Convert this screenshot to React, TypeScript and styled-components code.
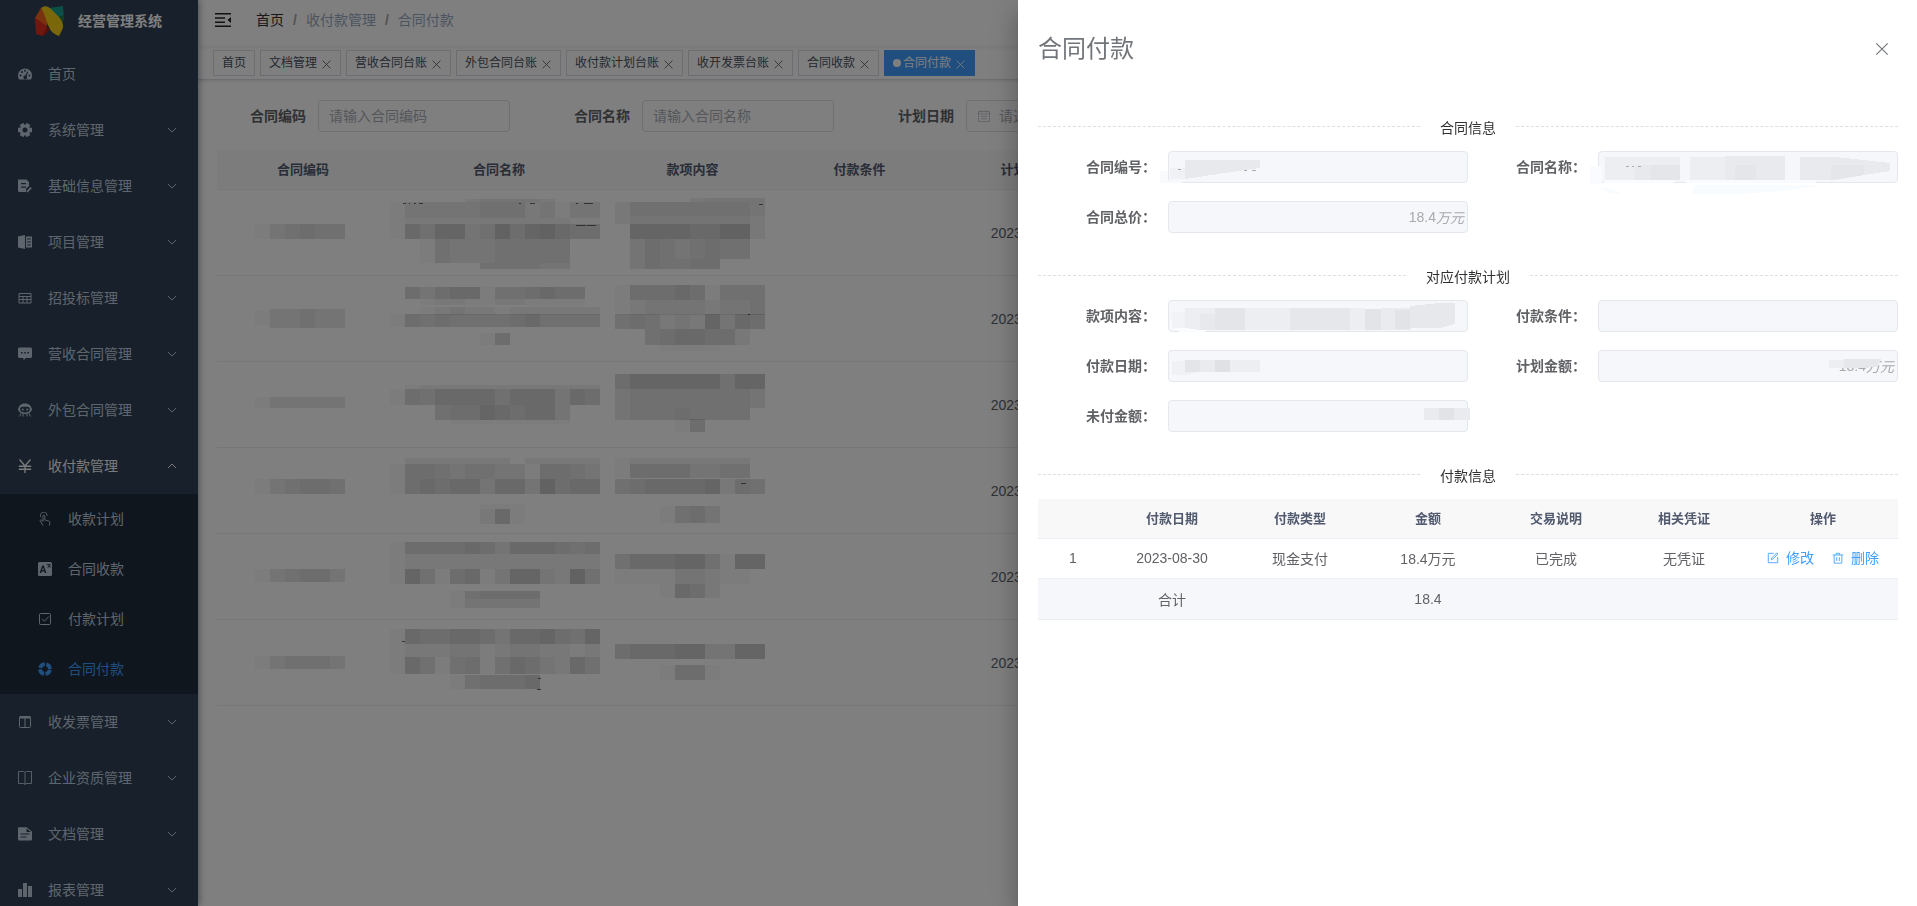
import React from 'react';
import styled, { createGlobalStyle, css } from 'styled-components';

const GlobalStyle = createGlobalStyle`
  *, *::before, *::after { box-sizing: border-box; }
  body {
    margin: 0;
    color: #606266;
    background: #fff;
    font-family: "Liberation Sans", "Noto Sans CJK SC", sans-serif;
    font-size: 14px;
    overflow: hidden;
  }
  button { font: inherit; color: inherit; background: none; border: 0; padding: 0; cursor: pointer; }
  a { color: inherit; text-decoration: none; }
  ul, ol { list-style: none; margin: 0; padding: 0; }
`;

/* ---------- icons ---------- */

type IconName =
  | 'dashboard' | 'gear' | 'edit' | 'build' | 'grid' | 'message' | 'people' | 'yen'
  | 'touch' | 'language' | 'checkbox' | 'ring' | 'columns' | 'book' | 'doc' | 'bars'
  | 'close' | 'calendar' | 'pen' | 'trash' | 'down' | 'up';

const line = { fill: 'none', stroke: 'currentColor', strokeWidth: 1 };
const thin = { fill: 'none', stroke: 'currentColor', strokeWidth: 0.9 };

const shapes: Record<IconName, React.ReactNode> = {
  dashboard: (
    <path
      fillRule="evenodd"
      d="M7 1.5a7 7 0 0 0-7 7c0 1.6.5 3 1.2 4.1h11.6A7.300 7.300 0 0 0 14 8.500a7 7 0 0 0-7-7zM2.600 7.600a1 1 0 1 1 0 2 1 1 0 0 1 0-2zM4 4a1 1 0 1 1 0 2 1 1 0 0 1 0-2zM7 2.700a1 1 0 1 1 0 2 1 1 0 0 1 0-2zM11.400 7.600a1 1 0 1 1 0 2 1 1 0 0 1 0-2zM9.300 4.500l.9.4-1.700 4.200a1.800 1.800 0 1 1-1.200-.5z"
    />
  ),
  gear: (
    <>
      <path fill="none" stroke="currentColor" strokeWidth="4.400" d="M0 7h14M3.500.94l7 12.120M10.500.94l-7 12.120" />
      <circle cx="7" cy="7" r="5.200" />
      <circle cx="7" cy="7" r="2.500" fill="#304156" />
    </>
  ),
  edit: (
    <>
      <path fillRule="evenodd" d="M0 .5h8.500L11 3v4L8 9.800V13H1.200A1.200 1.200 0 0 1 0 11.800zM3 4v1.200h5V4zm0 3.500v1.200h5V7.500z" />
      <path d="M12.600 8l1.200 1.200-4 4H8.500v-1.200z" />
    </>
  ),
  build: (
    <>
      <path d="M0 1.600L7 0v14l-7-1.600z" />
      <path fillRule="evenodd" d="M8 1.500h6v11H8zM9 3.500v1h3.800v-1zm0 3v1h3.800v-1zm0 3v1h3.800v-1z" />
    </>
  ),
  grid: <path {...line} d="M1 2.500h12v9.500H1zM1 5.500h12M1 8.500h12M5 5.500V12M9 5.500V12" />,
  message: (
    <path
      fillRule="evenodd"
      d="M1.500.5h11A1.500 1.500 0 0 1 14 2v7.500a1.500 1.500 0 0 1-1.500 1.500H7.800L5.500 13.500V11h-4A1.500 1.500 0 0 1 0 9.500V2A1.500 1.500 0 0 1 1.500.5zM3 5v1.600h1.600V5zm3.200 0v1.600h1.600V5zm3.200 0v1.600H11V5z"
    />
  ),
  people: (
    <>
      <path
        fillRule="evenodd"
        d="M7 .4c3.400 0 6 1.800 6.400 4.600.8.300.8 2.500-.2 3C12.300 10 10 11 7 11S1.700 10 .8 8C-.2 7.500-.2 5.300.6 5 1 2.200 3.600.4 7 .4zM3.600 4C1.800 4.300 1.700 8 3.400 8.800c2 1 5.200 1 7.200 0C12.300 8 12.200 4.300 10.400 4 8.500 3.700 5.500 3.700 3.600 4z"
      />
      <circle cx="4.800" cy="6.500" r="1" />
      <circle cx="9.200" cy="6.500" r="1" />
      <path {...line} d="M3 10.500L1.500 13.500M11 10.500l1.500 3M5 11v2.500M9 11v2.500" />
    </>
  ),
  yen: <path fill="none" stroke="currentColor" strokeWidth="1.400" d="M1.500.5L7 7l5.500-6.500M7 7v7M.8 7.300h12.400M.8 10.300h12.400" />,
  touch: (
    <path
      {...thin}
      d="M3 5.200A3.300 3.300 0 1 1 9 4M5 9.500V4.200c0-1.400 1.800-1.400 1.800 0V8l3.800 1c1.200.3 1.400 1 1.200 2l-.5 2.500M5 9.500L3.500 8c-.9-.7-1.800.2-1.200 1.200L5 13.500"
    />
  ),
  language: (
    <path
      fillRule="evenodd"
      d="M1.500 0h11A1.500 1.500 0 0 1 14 1.500v11a1.500 1.500 0 0 1-1.500 1.500h-11A1.500 1.500 0 0 1 0 12.500v-11A1.500 1.500 0 0 1 1.500 0zM4.300 3.500L1.600 11h1.500l.5-1.600h2.800L6.900 11h1.500L5.700 3.500zM5 5.200l1 3H4zM8.500 2.200v.8h2.200c-.1.900-.6 1.600-1.400 2.200l.5.600c.6-.4 1-.9 1.300-1.400.3.500.7 1 1.300 1.400l.4-.7c-.7-.5-1.100-1.200-1.200-2.100h1.200v-.8z"
    />
  ),
  checkbox: (
    <>
      <rect {...line} x="1.500" y="1.500" width="11" height="11" rx="1" />
      <path {...line} d="M4 6.800l2.400 2.400L10.800 4.500" />
    </>
  ),
  ring: (
    <circle cx="7" cy="7" r="4.900" fill="none" stroke="currentColor" strokeWidth="3.800" strokeDasharray="6.200 1.497" strokeDashoffset="-0.750" />
  ),
  columns: (
    <>
      <rect {...line} x="1.500" y="1.500" width="11" height="11" rx="1" />
      <path d="M1.500 1.500h11v2h-11z" />
      <path {...line} d="M7 2v10.500" />
    </>
  ),
  book: <path {...thin} d="M.5 .5h4.700C6.200.5 7 1 7 1.800c0-.8.8-1.300 1.800-1.300h4.700v12H8.800C7.800 12.500 7 12.800 7 13.500c0-.7-.8-1-1.800-1H.5zM7 1.800v11.500" />,
  doc: (
    <path
      fillRule="evenodd"
      d="M1.200.3H8.500L14 4.500v7.800a1.200 1.200 0 0 1-1.200 1.200H1.200A1.200 1.200 0 0 1 0 12.300V1.500A1.200 1.200 0 0 1 1.200.3zM8.500 1.500v3.500H13zM2.500 6.500v1h9v-1zm0 3v1h6v-1z"
    />
  ),
  bars: <path d="M0 6h4v8H0zM5 0h4v14H5zM10 3h4v11h-4z" />,
  close: <path {...line} d="M2 2l10 10M12 2L2 12" />,
  calendar: <path {...thin} d="M1.500 2.500h11v10h-11zM1.500 5h11M4.500 1v2.500M9.500 1v2.500M4 7.300h6M4 9.800h6" />,
  pen: <path {...line} d="M8 1.500H1.500v11h11V6M5 9l.5-2L11.500 1l1.300 1.300-6 6z" />,
  trash: <path {...line} d="M.8 3.500h12.400M5 3.500v-2h4v2M2.500 3.500v9.500h9V3.500M5.500 6v4.500M8.500 6v4.500" />,
  down: <path {...line} d="M3 5l4 4 4-4" />,
  up: <path {...line} d="M3 9l4-4 4 4" />,
};

const Svg = styled.svg<{ $size: number }>`
  display: block;
  flex: none;
  width: ${(p) => p.$size}px;
  height: ${(p) => p.$size}px;
`;

const Icon = ({ name, size = 14 }: { name: IconName; size?: number }) => (
  <Svg $size={size} viewBox="0 0 14 14" fill="currentColor" aria-hidden="true">
    {shapes[name]}
  </Svg>
);

/* ---------- sidebar ---------- */

const Shell = styled.div`
  display: flex;
  height: 100vh;
  overflow: hidden;
`;

const Sidebar = styled.aside`
  position: relative;
  z-index: 1;
  flex: none;
  width: 198px;
  overflow: hidden;
  background: #304156;
  box-shadow: 2px 0 6px rgba(0, 21, 41, 0.35);
`;

const Logo = styled.a`
  display: flex;
  align-items: center;
  gap: 12px;
  height: 46px;
  padding: 0 0 4px 34px;
  color: #fff;
  font-weight: 600;
  line-height: 20px;
`;

const MenuLink = styled.a<{ $sub?: boolean; $tone?: 'open' | 'active' }>`
  display: flex;
  align-items: center;
  gap: 16px;
  height: ${(p) => (p.$sub ? 50 : 56)}px;
  padding: 0 19px 0 ${(p) => (p.$sub ? 38 : 18)}px;
  color: ${(p) => (p.$tone === 'active' ? '#409eff' : p.$tone === 'open' ? '#f4f4f5' : '#bfcbd9')};
  span { flex: 1; padding-bottom: 2px; }
`;

const SubMenu = styled.ul`
  background: #1f2d3d;
`;

const menu: { icon: IconName; label: string; leaf?: boolean; open?: boolean }[] = [
  { icon: 'dashboard', label: '首页', leaf: true },
  { icon: 'gear', label: '系统管理' },
  { icon: 'edit', label: '基础信息管理' },
  { icon: 'build', label: '项目管理' },
  { icon: 'grid', label: '招投标管理' },
  { icon: 'message', label: '营收合同管理' },
  { icon: 'people', label: '外包合同管理' },
  { icon: 'yen', label: '收付款管理', open: true },
  { icon: 'columns', label: '收发票管理' },
  { icon: 'book', label: '企业资质管理' },
  { icon: 'doc', label: '文档管理' },
  { icon: 'bars', label: '报表管理' },
];

const subMenu: { icon: IconName; label: string }[] = [
  { icon: 'touch', label: '收款计划' },
  { icon: 'language', label: '合同收款' },
  { icon: 'checkbox', label: '付款计划' },
  { icon: 'ring', label: '合同付款' },
];

const LogoMark = () => (
  <Svg $size={32} viewBox="0 0 32 32" aria-hidden="true">
    <path d="M15 3l14-2 1 12-6 4z" fill="#14a08c" />
    <path d="M24 12l6-2v5l-4 8z" fill="#1f7a4c" />
    <path d="M1 13l6-8 6 18-4 8-7-2z" fill="#e0301e" />
    <path d="M1 13L7 3l8 4-2 14z" fill="#f0641e" />
    <path d="M7 3c4-3 7-2 10 1l8 8c4 5 5 9 3 13l-3 6c-5-2-8-4-10-9C12 16 11 9 7 3z" fill="#f4cf12" />
    <path d="M13 22l-5 9 4-2 4-5z" fill="#b41d12" />
  </Svg>
);

/* ---------- page header ---------- */

const Main = styled.main`
  flex: 1;
  min-width: 0;
  background: #fff;
`;

const Navbar = styled.header`
  display: flex;
  align-items: center;
  gap: 25px;
  height: 46px;
  padding: 0 17px 6px;
  box-shadow: 0 1px 4px rgba(0, 21, 41, 0.08);
`;

const Crumbs = styled.ol`
  display: flex;
  gap: 9px;
  line-height: 20px;
  color: #97a8be;
  li { display: flex; gap: 9px; }
  li:first-child a { color: #303133; }
  li + li::before { content: "/"; font-weight: 700; color: #a0a5ad; }
`;

const Tags = styled.nav`
  display: flex;
  align-items: flex-start;
  gap: 5px;
  height: 34px;
  padding: 4px 15px 0;
  border-bottom: 1px solid #d8dce5;
  box-shadow: 0 1px 3px 0 rgba(0, 0, 0, 0.12);
`;

const Tag = styled.div<{ $active?: boolean }>`
  display: flex;
  align-items: center;
  height: 26px;
  padding: 0 8px;
  border: 1px solid #d8dce5;
  background: #fff;
  color: #495060;
  font-size: 12px;
  line-height: 24px;
  white-space: nowrap;
  button { margin: 2px 0 0 4px; }
  ${(p) =>
    p.$active &&
    css`
      background: #409eff;
      border-color: #409eff;
      color: #fff;
      &::before {
        content: "";
        width: 8px;
        height: 8px;
        margin-right: 2px;
        border-radius: 50%;
        background: #fff;
      }
    `}
`;

const tags = ['首页', '文档管理', '营收合同台账', '外包合同台账', '收付款计划台账', '收开发票台账', '合同收款', '合同付款'];

/* ---------- search and list ---------- */

const Search = styled.form`
  display: flex;
  gap: 64px;
  padding: 20px 20px 0 52px;
  overflow: hidden;
`;

const SearchItem = styled.div`
  display: flex;
  flex: none;
  align-items: center;
  gap: 12px;
  label { padding-bottom: 2px; font-weight: 700; }
`;

const SearchBox = styled.div`
  display: flex;
  align-items: center;
  gap: 8px;
  width: 192px;
  height: 32px;
  padding: 0 10px;
  border: 1px solid #dcdfe6;
  border-radius: 4px;
  color: #c0c4cc;
  input {
    flex: 1;
    min-width: 0;
    padding: 0;
    border: 0;
    outline: 0;
    background: none;
    font: inherit;
    color: #606266;
  }
  input::placeholder { color: #a8adb6; }
`;

const ListArea = styled.div`
  margin: 18px 0 0 19px;
  overflow: hidden;
`;

const tableText = css`
  border-collapse: separate;
  border-spacing: 0;
  table-layout: fixed;
  th, td {
    padding: 0;
    text-align: center;
    border-bottom: 1px solid #ebeef5;
  }
  th {
    height: 40px;
    padding-bottom: 2px;
    background: #f8f8f9;
    color: #515a6e;
    font-size: 13px;
    font-weight: 700;
  }
`;

const ListTable = styled.table`
  ${tableText}
  width: 893px;
  td { height: 86px; }
`;

const Mosaic = styled.svg`
  display: block;
  width: 100%;
  height: 85px;
  shape-rendering: crispEdges;
`;

/* One band of blurred blocks: left, top, height, then a darkness digit for every 15px block. */
type Band = [number, number, number, string];

const Blocks = ({ width, bands, marks = [] }: { width: number; bands: Band[]; marks?: number[][] }) => (
  <Mosaic viewBox={`0 0 ${width} 85`} aria-hidden="true">
    {bands.map(([x, y, h, digits]) =>
      digits.split('').map((d, i) => (
        <rect key={`${x}-${y}-${i}`} x={x + i * 15} y={y} width={15} height={h} fillOpacity={Number(d) * 0.029} />
      )),
    )}
    {marks.map(([x, y, w]) => (
      <rect key={`m${x}-${y}`} x={x} y={y} width={w} height={1} fill="#222" fillOpacity={0.65} />
    ))}
  </Mosaic>
);

const rows: { code: Band[]; name: Band[]; item: Band[]; nameMarks?: number[][]; itemMarks?: number[][] }[] = [
  {
    code: [[38, 34, 15, '134544']],
    name: [
      [76, 9, 3, '2333320'], [1, 12, 16, '13333344423133'], [1, 28, 6, '12222222222211'],
      [1, 34, 15, '16477348578655'], [31, 49, 24, '1433344444'], [91, 73, 6, '444433'],
    ],
    nameMarks: [[14, 13, 3], [20, 13, 1], [25, 13, 2], [30, 13, 4], [130, 13, 2], [141, 13, 5], [187, 13, 2], [195, 13, 9], [187, 35, 10], [198, 35, 9]],
    item: [[81, 8, 4, '23333'], [6, 12, 14, '2444444443'], [6, 26, 8, '2333333332'], [21, 34, 15, '777766882'], [21, 49, 20, '35434544'], [21, 69, 10, '354455']],
    itemMarks: [[150, 14, 4]],
  },
  {
    code: [[38, 35, 14, '100000'], [53, 33, 19, '33433']],
    name: [
      [16, 11, 12, '535661445655'], [16, 23, 6, '012211221111'], [16, 31, 8, '0123221222222'],
      [1, 38, 13, '15454444564444'], [91, 57, 12, '15'],
    ],
    item: [[6, 9, 15, '1555651444'], [6, 24, 15, '1233332334'], [6, 38, 15, '4542327365'], [36, 53, 16, '4566552'], [51, 69, 6, '1111']],
    itemMarks: [[139, 38, 2]],
  },
  {
    code: [[38, 35, 11, '133333']],
    name: [[16, 23, 4, '1222222222222'], [1, 27, 16, '15466664666365'], [46, 43, 15, '455765663'], [46, 58, 4, '011111111']],
    item: [[6, 12, 15, '5777777477'], [6, 27, 19, '3444444443'], [6, 46, 12, '344454444'], [66, 57, 13, '15']],
  },
  {
    code: [[38, 31, 15, '134554']],
    name: [[16, 10, 6, '2222222022222'], [1, 16, 15, '15543443315543'], [1, 31, 15, '15656636638566'], [91, 56, 5, '111'], [91, 61, 15, '261']],
    item: [[6, 10, 6, '1222222220'], [6, 16, 14, '1555533440'], [6, 31, 15, '4566667254'], [51, 58, 17, '1453']],
    itemMarks: [[132, 35, 5]],
  },
  {
    code: [[38, 35, 13, '134553']],
    name: [[1, 8, 12, '15555653666545'], [1, 20, 15, '12222222222222'], [1, 35, 15, '17415613773284'], [61, 57, 8, '145555'], [61, 65, 9, '133333']],
    item: [[6, 20, 15, '4666774177'], [6, 35, 15, '1111332110'], [51, 50, 14, '1652']],
  },
  {
    code: [[38, 36, 13, '134443']],
    name: [[1, 9, 15, '16556653667547'], [1, 24, 13, '12223312332212'], [1, 37, 17, '16414514653264'], [61, 55, 14, '145556']],
    nameMarks: [[13, 21, 3], [149, 58, 3], [148, 69, 4]],
    item: [[6, 24, 15, '5666773377'], [51, 45, 15, '1551']],
  },
];

/* ---------- drawer ---------- */

const Overlay = styled.div`
  position: fixed;
  inset: 0;
  z-index: 10;
  background: rgba(0, 0, 0, 0.5);
`;

const Drawer = styled.section`
  position: fixed;
  top: 0;
  right: 0;
  bottom: 0;
  z-index: 11;
  width: calc(47% - 2px);
  padding: 0 19px 0 20px;
  background: #fff;
  overflow: auto;
  box-shadow: 0 8px 10px -5px rgba(0, 0, 0, 0.2), 0 16px 24px 2px rgba(0, 0, 0, 0.14), 0 6px 30px 5px rgba(0, 0, 0, 0.12);
`;

const DrawerHead = styled.div`
  display: flex;
  align-items: center;
  justify-content: space-between;
  height: 98px;
  padding-right: 8px;
  color: #72767b;
  h2 { margin: 0; font-size: 24px; font-weight: 400; line-height: 32px; }
`;

const Divider = styled.h3`
  display: flex;
  gap: 20px;
  height: 36px;
  margin: 0;
  color: #303133;
  font-size: 14px;
  font-weight: 400;
  line-height: 26px;
  &::before, &::after {
    content: "";
    flex: 1;
    margin-top: 11px;
    border-top: 1px dashed #dcdfe6;
  }
`;

const Fields = styled.div`
  display: grid;
  grid-template-columns: 1fr 1fr;
  row-gap: 18px;
  padding-bottom: 31px;
`;

const FieldRow = styled.div`
  display: flex;
  align-items: center;
  label {
    width: 130px;
    padding-right: 12px;
    text-align: right;
    font-weight: 700;
    line-height: 32px;
  }
`;

const FieldBox = styled.div`
  position: relative;
  display: flex;
  flex: 1;
  align-items: center;
  min-width: 0;
  height: 32px;
  padding: 0 3px 0 15px;
  border: 1px solid #e4e7ed;
  border-radius: 4px;
  background: #f5f7fa;
  color: #a6a9af;
  input {
    flex: 1;
    min-width: 0;
    padding: 0;
    border: 0;
    outline: 0;
    background: none;
    color: inherit;
    font: inherit;
    text-align: right;
  }
`;

const Smudge = styled.svg<{ $end?: boolean }>`
  position: absolute;
  top: -1px;
  ${(p) => (p.$end ? 'right: -9px;' : 'left: -9px;')}
  width: 318px;
  height: 46px;
  shape-rendering: crispEdges;
  pointer-events: none;
`;

const DrawerForm = styled.form`
  padding-top: 17px;
`;

const PayTable = styled.table`
  ${tableText}
  width: 100%;
  td { height: 40px; padding-bottom: 1px; }
  tfoot td { height: 41px; background: #f5f7fa; }
`;

const Actions = styled.div`
  display: flex;
  justify-content: center;
  gap: 18px;
  color: #409eff;
  button { display: flex; align-items: center; gap: 7px; line-height: 20px; }
`;

/* Smudges are drawn in a frame that starts 8px left of the field's border. */
const smudges: Record<string, { end?: boolean; art: React.ReactNode }> = {
  code: {
    art: (
      <>
        <path d="M0 20h8v10h14v2H0z" fill="#f9fafc" />
        <path d="M10 17h15v11H10z" fill="#eff1f4" />
        <path d="M25 9h75v8l-22 3-53 8z" fill="#e7e9ec" />
        <path d="M18 18h3v1h-3zM84 19h3v1h-3zM92 19h4v1h-4z" fill="#aaa" />
      </>
    ),
  },
  name: {
    art: (
      <>
        <path d="M0 15h12v18H0z" fill="#fafbfe" />
        <path d="M14 29h70v3H14zM96 29h130v3H96z" fill="#f8fbff" />
        <path d="M10 36l12 2 10 5-14-1zM104 34h128l-30 5-50 4h-50z" fill="#f9fcff" />
        <path d="M15 6h75v23H15z" fill="#eceef1" />
        <path d="M45 14h45v15H45z" fill="#e8e9ed" />
        <path d="M60 14h30v15H60z" fill="#e4e6e9" />
        <path d="M100 6h95v23h-95z" fill="#eceef1" />
        <path d="M135 5h60v24h-60z" fill="#e8eaed" />
        <path d="M145 14h21v15h-21z" fill="#e4e6e9" />
        <path d="M210 6h36l28 3 26 3v8l-26 4-28 5h-36z" fill="#e9eaed" />
        <path d="M241 14h33v10l-33 5z" fill="#e4e6e9" />
        <path d="M36 15h3v1h-3zM42 15h2v1h-2zM48 15h3v1h-3z" fill="#aaa" />
      </>
    ),
  },
  item: {
    art: (
      <>
        <path d="M9 24h37v8H20z" fill="#fbfcfe" />
        <path d="M12 12h14v16H12z" fill="#f1f3f6" />
        <path d="M25 8h180v22H40l-15-2z" fill="#eceef1" />
        <path d="M40 14h45v16H40z" fill="#e7e9ec" />
        <path d="M55 8h30v22H55z" fill="#e3e5e9" />
        <path d="M130 8h60v22h-60z" fill="#e5e7ea" />
        <path d="M205 9h16v21h-16z" fill="#e2e4e8" />
        <path d="M221 8h30v22h-30z" fill="#e9ebee" />
        <path d="M235 10h15v19h-15z" fill="#e1e3e7" />
        <path d="M250 6l30-3h15v21l-15 4h-30z" fill="#e7e8eb" />
      </>
    ),
  },
  date: {
    art: (
      <>
        <path d="M12 11h28v11l-15 3H12z" fill="#eff1f4" />
        <path d="M25 10h15v12H25z" fill="#e3e5e8" />
        <path d="M40 10h15v12H40z" fill="#e9ebee" />
        <path d="M55 10h15v12H55z" fill="#dfe1e5" />
        <path d="M70 10h30v12H70z" fill="#eceef1" />
      </>
    ),
  },
  unpaid: {
    end: true,
    art: (
      <>
        <path d="M266 8h46v12h-46z" fill="#e9ebee" />
        <path d="M281 8h15v12h-15z" fill="#e1e3e6" />
      </>
    ),
  },
  plan: {
    end: true,
    art: (
      <>
        <path d="M241 10h52l-3 7-18 1h-31z" fill="#eceef1" />
        <path d="M256 9h37l-3 8-18 1h-16z" fill="#e5e7ea" />
      </>
    ),
  },
};

const Field = ({ id, label, value, smudge }: { id: string; label: string; value?: string; smudge?: string }) => (
  <FieldRow>
    <label htmlFor={id}>{label}：</label>
    <FieldBox>
      <input id={id} disabled defaultValue={value} />
      {value && <i>万元</i>}
      {smudge && (
        <Smudge viewBox="0 0 318 46" $end={smudges[smudge].end} aria-hidden="true">
          {smudges[smudge].art}
        </Smudge>
      )}
    </FieldBox>
  </FieldRow>
);

const payHead = ['', '付款日期', '付款类型', '金额', '交易说明', '相关凭证', '操作'];

export default function App() {
  return (
    <>
      <GlobalStyle />
      <Shell>
        <Sidebar>
          <Logo href="#">
            <LogoMark />
            经营管理系统
          </Logo>
          <ul>
            {menu.map((m) => (
              <li key={m.label}>
                <MenuLink href="#" $tone={m.open ? 'open' : undefined}>
                  <Icon name={m.icon} />
                  <span>{m.label}</span>
                  {!m.leaf && <Icon name={m.open ? 'up' : 'down'} />}
                </MenuLink>
                {m.open && (
                  <SubMenu>
                    {subMenu.map((s) => (
                      <li key={s.label}>
                        <MenuLink href="#" $sub $tone={s.label === '合同付款' ? 'active' : undefined}>
                          <Icon name={s.icon} />
                          <span>{s.label}</span>
                        </MenuLink>
                      </li>
                    ))}
                  </SubMenu>
                )}
              </li>
            ))}
          </ul>
        </Sidebar>

        <Main>
          <Navbar>
            <button type="button" aria-label="收起菜单">
              <Svg $size={16} viewBox="0 0 16 16" fill="#222" aria-hidden="true">
                <path d="M0 1h16v1.500H0zM0 5.200h10v1.500H0zM0 9.400h10v1.500H0zM0 13.500h16v1.500H0zM16 5v6l-3.500-3z" />
              </Svg>
            </button>
            <Crumbs>
              <li><a href="#">首页</a></li>
              <li>收付款管理</li>
              <li>合同付款</li>
            </Crumbs>
          </Navbar>
          <Tags>
            {tags.map((t, i) => (
              <Tag key={t} $active={i === tags.length - 1}>
                <a href="#">{t}</a>
                {i > 0 && (
                  <button type="button" aria-label={`关闭${t}`}>
                    <Icon name="close" size={11} />
                  </button>
                )}
              </Tag>
            ))}
          </Tags>

          <Search>
            <SearchItem>
              <label htmlFor="q-code">合同编码</label>
              <SearchBox><input id="q-code" placeholder="请输入合同编码" /></SearchBox>
            </SearchItem>
            <SearchItem>
              <label htmlFor="q-name">合同名称</label>
              <SearchBox><input id="q-name" placeholder="请输入合同名称" /></SearchBox>
            </SearchItem>
            <SearchItem>
              <label htmlFor="q-date">计划日期</label>
              <SearchBox>
                <Icon name="calendar" />
                <input id="q-date" placeholder="请选择计划日期" />
              </SearchBox>
            </SearchItem>
          </Search>

          <ListArea>
            <ListTable>
              <colgroup>
                <col width="172" /><col width="220" /><col width="167" /><col width="167" /><col width="167" />
              </colgroup>
              <thead>
                <tr>
                  <th>合同编码</th><th>合同名称</th><th>款项内容</th><th>付款条件</th><th>计划日期</th>
                </tr>
              </thead>
              <tbody>
                {rows.map((r, i) => (
                  <tr key={i}>
                    <td><Blocks width={172} bands={r.code} /></td>
                    <td><Blocks width={220} bands={r.name} marks={r.nameMarks} /></td>
                    <td><Blocks width={167} bands={r.item} marks={r.itemMarks} /></td>
                    <td />
                    <td>2023-08-30</td>
                  </tr>
                ))}
              </tbody>
            </ListTable>
          </ListArea>
        </Main>
      </Shell>

      <Overlay />
      <Drawer role="dialog" aria-labelledby="drawer-title">
        <DrawerHead>
          <h2 id="drawer-title">合同付款</h2>
          <button type="button" aria-label="关闭"><Icon name="close" size={16} /></button>
        </DrawerHead>
        <DrawerForm>
          <Divider>合同信息</Divider>
          <Fields>
            <Field id="f-code" label="合同编号" smudge="code" />
            <Field id="f-name" label="合同名称" smudge="name" />
            <Field id="f-total" label="合同总价" value="18.4" />
          </Fields>
          <Divider>对应付款计划</Divider>
          <Fields>
            <Field id="f-item" label="款项内容" smudge="item" />
            <Field id="f-cond" label="付款条件" />
            <Field id="f-date" label="付款日期" smudge="date" />
            <Field id="f-plan" label="计划金额" value="18.4" smudge="plan" />
            <Field id="f-unpaid" label="未付金额" smudge="unpaid" />
          </Fields>
          <Divider>付款信息</Divider>
          <PayTable>
            <colgroup>
              <col width="70" /><col /><col /><col /><col /><col /><col width="150" />
            </colgroup>
            <thead>
              <tr>{payHead.map((h, i) => <th key={i}>{h}</th>)}</tr>
            </thead>
            <tbody>
              <tr>
                <td>1</td>
                <td>2023-08-30</td>
                <td>现金支付</td>
                <td>18.4万元</td>
                <td>已完成</td>
                <td>无凭证</td>
                <td>
                  <Actions>
                    <button type="button"><Icon name="pen" size={12} />修改</button>
                    <button type="button"><Icon name="trash" size={12} />删除</button>
                  </Actions>
                </td>
              </tr>
            </tbody>
            <tfoot>
              <tr>
                <td /><td>合计</td><td /><td>18.4</td><td /><td /><td />
              </tr>
            </tfoot>
          </PayTable>
        </DrawerForm>
      </Drawer>
    </>
  );
}
